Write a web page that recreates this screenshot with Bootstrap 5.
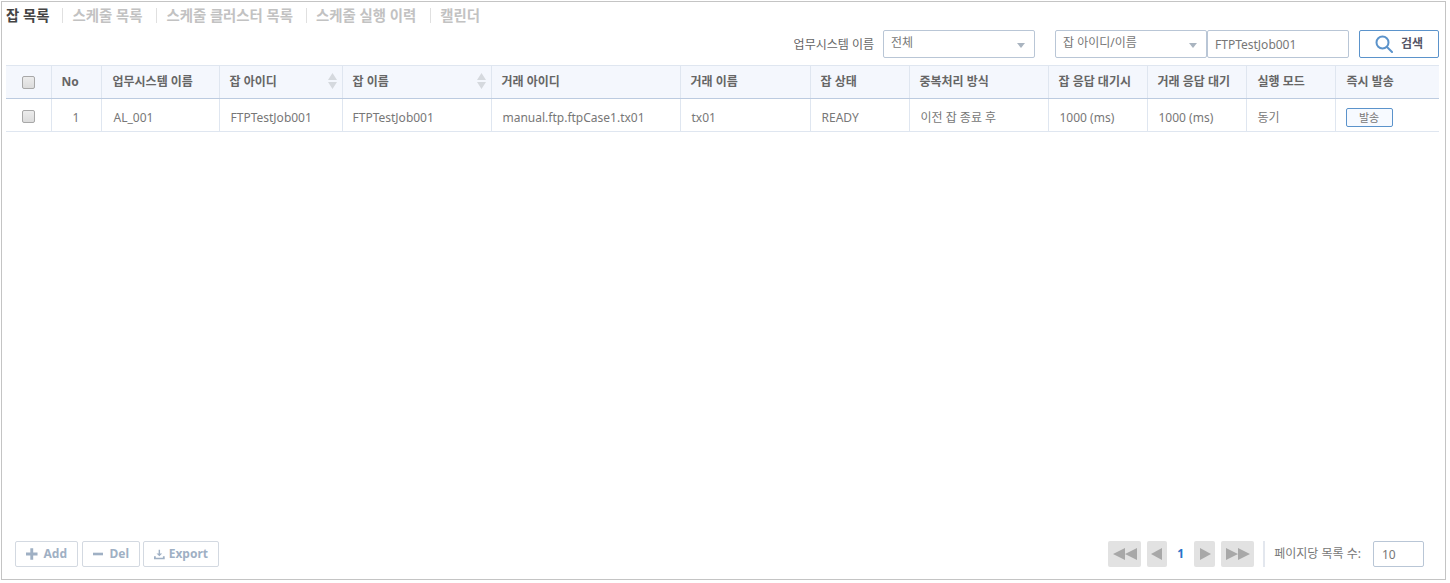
<!DOCTYPE html>
<html lang="ko"><head><meta charset="utf-8"><title>잡 목록</title>
<link href="https://cdn.jsdelivr.net/npm/bootstrap@5.3.0/dist/css/bootstrap.min.css" rel="stylesheet">
<style>
body{margin:0;background:#fff;font-family:"Noto Sans","Noto Sans CJK KR",sans-serif;font-size:12px;color:#777}
.frame{margin:1px 0 0 1px;width:1445px;height:579px;border:1px solid #c4c4c4;padding:0 6px 12px 4px}
.tabs{height:27px;font-size:14.4px;font-weight:700;color:#c2c2c2}
.tabs span{line-height:15px;border-left:1px solid #e0e0e0;padding:0 14px 0 9px}
.tabs span:first-child{border:0;padding:0 13px 0 0;color:#444}
.tabs span:nth-child(3){padding-right:13px}
.tools{height:30px;margin-bottom:6px}
.lbl{margin-right:9px;padding-top:2px;color:#666}
.sel{height:28px;border:1px solid #b9c6d6;border-radius:2px;padding:0 7px;line-height:24px;color:#777;position:relative}
.sel::after{content:"";position:absolute;right:9px;top:12px;border-style:solid;border-width:5px 4.5px 0;border-color:#a9b4c0 transparent transparent}
.sel1{width:152px;margin-right:20px}.sel2{width:152px}
.inp{width:142px;height:28px;border:1px solid #b9c6d6;border-radius:2px;padding:0 7px;line-height:28px;margin-right:10px;color:#777}
.srch{width:80px;height:28px;border:1px solid #5b93cb;border-radius:2px;background:#fff;color:#556;font-weight:700;font-size:12px;padding:0}
.grid{width:1433px;table-layout:fixed;border-collapse:collapse}
.grid th,.grid td{border-right:1px solid #dfe6f0;padding:0 10px;white-space:nowrap;overflow:hidden;vertical-align:middle}
.grid th:last-child,.grid td:last-child{border-right:0}
.grid th{height:33px;background:#f4f7fd;color:#666;font-weight:700;border-top:1px solid #dfe6f0;border-bottom:1px solid #bccbe0}
.grid td{height:33px;color:#777;border-bottom:1px solid #dfe6f0;padding-top:6px}
.grid .ctr{text-align:center;padding-left:0;padding-right:0}
.grid .chk{padding-top:2px}
.grid .p11{padding-left:11px}
.grid .p12{padding-left:12px}
.cb{appearance:none;display:block;width:13px;height:13px;margin:0 auto;border:1px solid #a8a8a8;border-radius:2px;background:linear-gradient(#ececec,#dcdcdc)}
.srt{float:right;margin:0 -5px 0 0;display:block}
.grid .sendc{padding-top:0}
.send{width:47px;height:19px;padding:0;border:1px solid #5b93cb;border-radius:2px;background:#f7faff;color:#777;font-size:11px;line-height:17px;display:block;margin-top:5px}
.w1{width:45px}.w2{width:50px}.w3{width:118px}.w4{width:123px}.w5{width:149px}.w6{width:189px}.w7{width:130px}.w8{width:99px}.w9{width:139px}.w10{width:99px}.w11{width:99px}.w12{width:89px}.w13{width:104px}
.foot{padding-left:9px;padding-right:15px}
.fbtn{height:26px;border:1px solid #d3d9e1;border-radius:2px;background:#fff;color:#9fb0c4;font-weight:700;font-size:12px;padding:0 10px;gap:6px;justify-content:center}
.fa{width:63px}.fd{width:58px}.fe{width:76px;gap:4px}
.gap3{gap:4px}
.fd{margin-right:-1px}
.pg{background:#e2e2e2;height:26px;border-radius:2px}
.pg1{width:33px}.pg2{width:20px}.pg3{width:21px}
.gapl{margin-left:6px}
.pnum{color:#2a70c8;font-weight:700;width:27px;text-align:center}
.sep{width:2px;height:26px;background:#e3e7ee;margin:0 9px}
.pinp{width:51px;height:26px;border:1px solid #b9c6d6;border-radius:2px;padding:0 8px;line-height:25px;margin-left:12px}
</style></head>
<body>
<div class="frame d-flex flex-column">
 <div class="tabs d-flex align-items-center"><span>잡 목록</span><span>스케줄 목록</span><span>스케줄 클러스터 목록</span><span>스케줄 실행 이력</span><span>캘린더</span></div>
 <div class="tools d-flex align-items-center justify-content-end">
  <div class="lbl">업무시스템 이름</div>
  <div class="sel sel1">전체</div>
  <div class="sel sel2">잡 아이디/이름</div>
  <div class="inp">FTPTestJob001</div>
  <button class="srch d-flex align-items-center justify-content-center gap-2" type="button"><svg width="18" height="18" viewBox="0 0 18 18" fill="none" stroke="#5b93cb" stroke-width="2"><circle cx="7.500" cy="7.500" r="6"/><path d="M12 12l5 5" stroke-linecap="round"/></svg>검색</button>
 </div>
 <table class="grid">
  <colgroup><col class="w1"><col class="w2"><col class="w3"><col class="w4"><col class="w5"><col class="w6"><col class="w7"><col class="w8"><col class="w9"><col class="w10"><col class="w11"><col class="w12"><col class="w13"></colgroup>
  <thead><tr>
   <th class="ctr"><input class="cb" type="checkbox" aria-label="전체"></th><th>No</th><th class="p11">업무시스템 이름</th>
   <th>잡 아이디<svg class="srt" width="9" height="16" viewBox="0 0 9 16" fill="#d5d9de"><path d="M4.500 0L9 7H0zM0 9h9l-4.500 7z"/></svg></th>
   <th>잡 이름<svg class="srt" width="9" height="16" viewBox="0 0 9 16" fill="#d5d9de"><path d="M4.500 0L9 7H0zM0 9h9l-4.500 7z"/></svg></th>
   <th>거래 아이디</th><th>거래 이름</th><th>잡 상태</th><th>중복처리 방식</th><th>잡 응답 대기시</th><th>거래 응답 대기</th><th class="p11">실행 모드</th><th class="p11">즉시 발송</th>
  </tr></thead>
  <tbody><tr>
   <td class="ctr chk"><input class="cb" type="checkbox" aria-label="선택"></td><td class="ctr">1</td><td class="p12">AL_001</td><td class="p11">FTPTestJob001</td><td>FTPTestJob001</td><td class="p11">manual.ftp.ftpCase1.tx01</td><td class="p11">tx01</td><td class="p11">READY</td><td class="p11">이전 잡 종료 후</td><td class="p11">1000 (ms)</td><td class="p11">1000 (ms)</td><td class="p11">동기</td><td class="sendc"><button class="send" type="button">발송</button></td>
  </tr></tbody>
 </table>
 <div class="foot mt-auto d-flex align-items-center">
  <div class="d-flex gap3">
   <button class="fbtn fa d-flex align-items-center" type="button"><svg width="12" height="12" viewBox="0 0 12 12" fill="#9fb0c4"><path d="M4.500 0h3v4.500H12v3H7.500V12h-3V7.500H0v-3h4.500z"/></svg>Add</button>
   <button class="fbtn fd d-flex align-items-center" type="button"><svg width="12" height="12" viewBox="0 0 12 12" fill="#9fb0c4"><path d="M0 4.500h12v3H0z"/></svg>Del</button>
   <button class="fbtn fe d-flex align-items-center" type="button"><svg width="15" height="13" viewBox="0 0 15 13" fill="#9fb0c4"><path d="M6.500 0h2v5h3l-4 4-4-4h3zM0 9h2.500v2h10V9H15v4H0z"/></svg>Export</button>
  </div>
  <div class="ms-auto d-flex align-items-center">
   <div class="pg pg1 d-flex align-items-center justify-content-center"><svg width="26" height="12" viewBox="0 0 26 12" fill="#a8a8a8"><path d="M13 0v12L1 6zM25 0v12L13 6z"/></svg></div>
   <div class="pg pg2 gapl d-flex align-items-center justify-content-center"><svg width="12" height="12" viewBox="0 0 12 12" fill="#a8a8a8"><path d="M11 0v12L0 6z"/></svg></div>
   <div class="pnum">1</div>
   <div class="pg pg3 d-flex align-items-center justify-content-center"><svg width="12" height="12" viewBox="0 0 12 12" fill="#a8a8a8"><path d="M1 0v12l11-6z"/></svg></div>
   <div class="pg pg1 gapl d-flex align-items-center justify-content-center"><svg width="26" height="12" viewBox="0 0 26 12" fill="#a8a8a8"><path d="M1 0v12l12-6zM13 0v12l12-6z"/></svg></div>
   <div class="sep"></div>
   <div>페이지당 목록 수:</div>
   <div class="pinp">10</div>
  </div>
 </div>
</div>
</body></html>
